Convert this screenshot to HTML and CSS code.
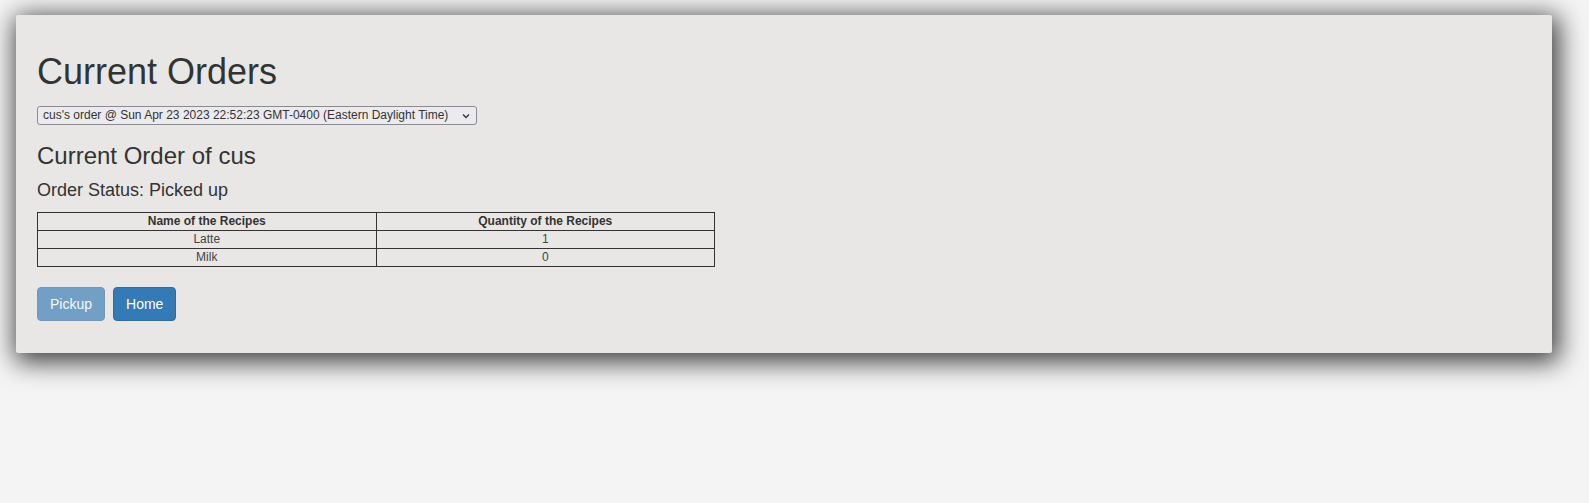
FILE: index.html
```html
<!DOCTYPE html>
<html>
<head>
<meta charset="utf-8">
<title>Current Orders</title>
<link rel="stylesheet" href="styles.css">
</head>
<body>
<div class="panel">
  <h1 class="title">Current Orders</h1>
  <div class="select-row">
    <div class="select-wrap">
      <select class="order-select">
        <option>cus's order @ Sun Apr 23 2023 22:52:23 GMT-0400 (Eastern Daylight Time)</option>
      </select>
      <svg class="chevron" width="8" height="6" viewBox="0 0 8 6" aria-hidden="true"><path d="M1 1.5 L4 4.5 L7 1.5" fill="none" stroke="#333" stroke-width="1.3"/></svg>
    </div>
  </div>
  <h3 class="subtitle">Current Order of cus</h3>
  <h4 class="status">Order Status: Picked up</h4>
  <table class="recipes">
    <thead>
      <tr><th>Name of the Recipes</th><th>Quantity of the Recipes</th></tr>
    </thead>
    <tbody>
      <tr><td>Latte</td><td>1</td></tr>
      <tr><td>Milk</td><td>0</td></tr>
    </tbody>
  </table>
  <div class="actions">
    <button class="btn btn-disabled" disabled>Pickup</button>
    <button class="btn">Home</button>
  </div>
</div>
</body>
</html>
```
FILE: styles.css
```css
html, body {
  margin: 0;
  padding: 0;
}
body {
  background: #f4f4f4;
  font-family: "Liberation Sans", Arial, Helvetica, sans-serif;
  color: #333;
  font-size: 14px;
  line-height: 1.42857;
  padding: 15px 37px 0 16px;
  min-height: 503px;
  box-sizing: border-box;
}
.panel {
  background: #e8e7e5;
  border-radius: 2px;
  padding: 17px 21px 32px 21px;
  box-shadow: 3px 5px 26px 4px rgba(0, 0, 0, 0.75);
}
.title {
  font-size: 36px;
  font-weight: 500;
  line-height: 1.1;
  margin: 20px 0 14px 0;
}
.select-row {
  display: flex;
}
.select-wrap {
  position: relative;
  display: flex;
}
.order-select {
  -webkit-appearance: none;
  appearance: none;
  font-family: "Liberation Sans", Arial, sans-serif;
  font-size: 12px;
  color: #333;
  height: 19px;
  width: 440px;
  border: 1px solid #8a8a92;
  border-radius: 3px;
  background: #ebebef;
  padding: 0 20px 0 5px;
  line-height: 17px;
}
.chevron {
  position: absolute;
  right: 7px;
  top: 7px;
  pointer-events: none;
}
.subtitle {
  font-size: 24px;
  font-weight: 500;
  line-height: 1.1;
  margin: 18px 0 12px 0;
}
.status {
  font-size: 18px;
  font-weight: 500;
  line-height: 1.1;
  margin: 10px 0 11px 0;
}
.recipes {
  border-collapse: collapse;
  width: 678px;
  font-size: 12px;
  line-height: 17px;
  margin-bottom: 20px;
  table-layout: fixed;
}
.recipes th, .recipes td {
  border: 1px solid #333;
  text-align: center;
  padding: 0;
  height: 17px;
}
.recipes td {
  color: #444;
}
.recipes th {
  font-weight: bold;
}
.actions {
  display: flex;
  gap: 8px;
}
.btn {
  font-family: "Liberation Sans", Arial, sans-serif;
  font-size: 14px;
  line-height: 20px;
  padding: 6px 12px;
  color: #fff;
  background: #337ab7;
  border: 1px solid #2e6da4;
  border-radius: 4px;
}
.btn-disabled {
  opacity: 0.65;
}
```
